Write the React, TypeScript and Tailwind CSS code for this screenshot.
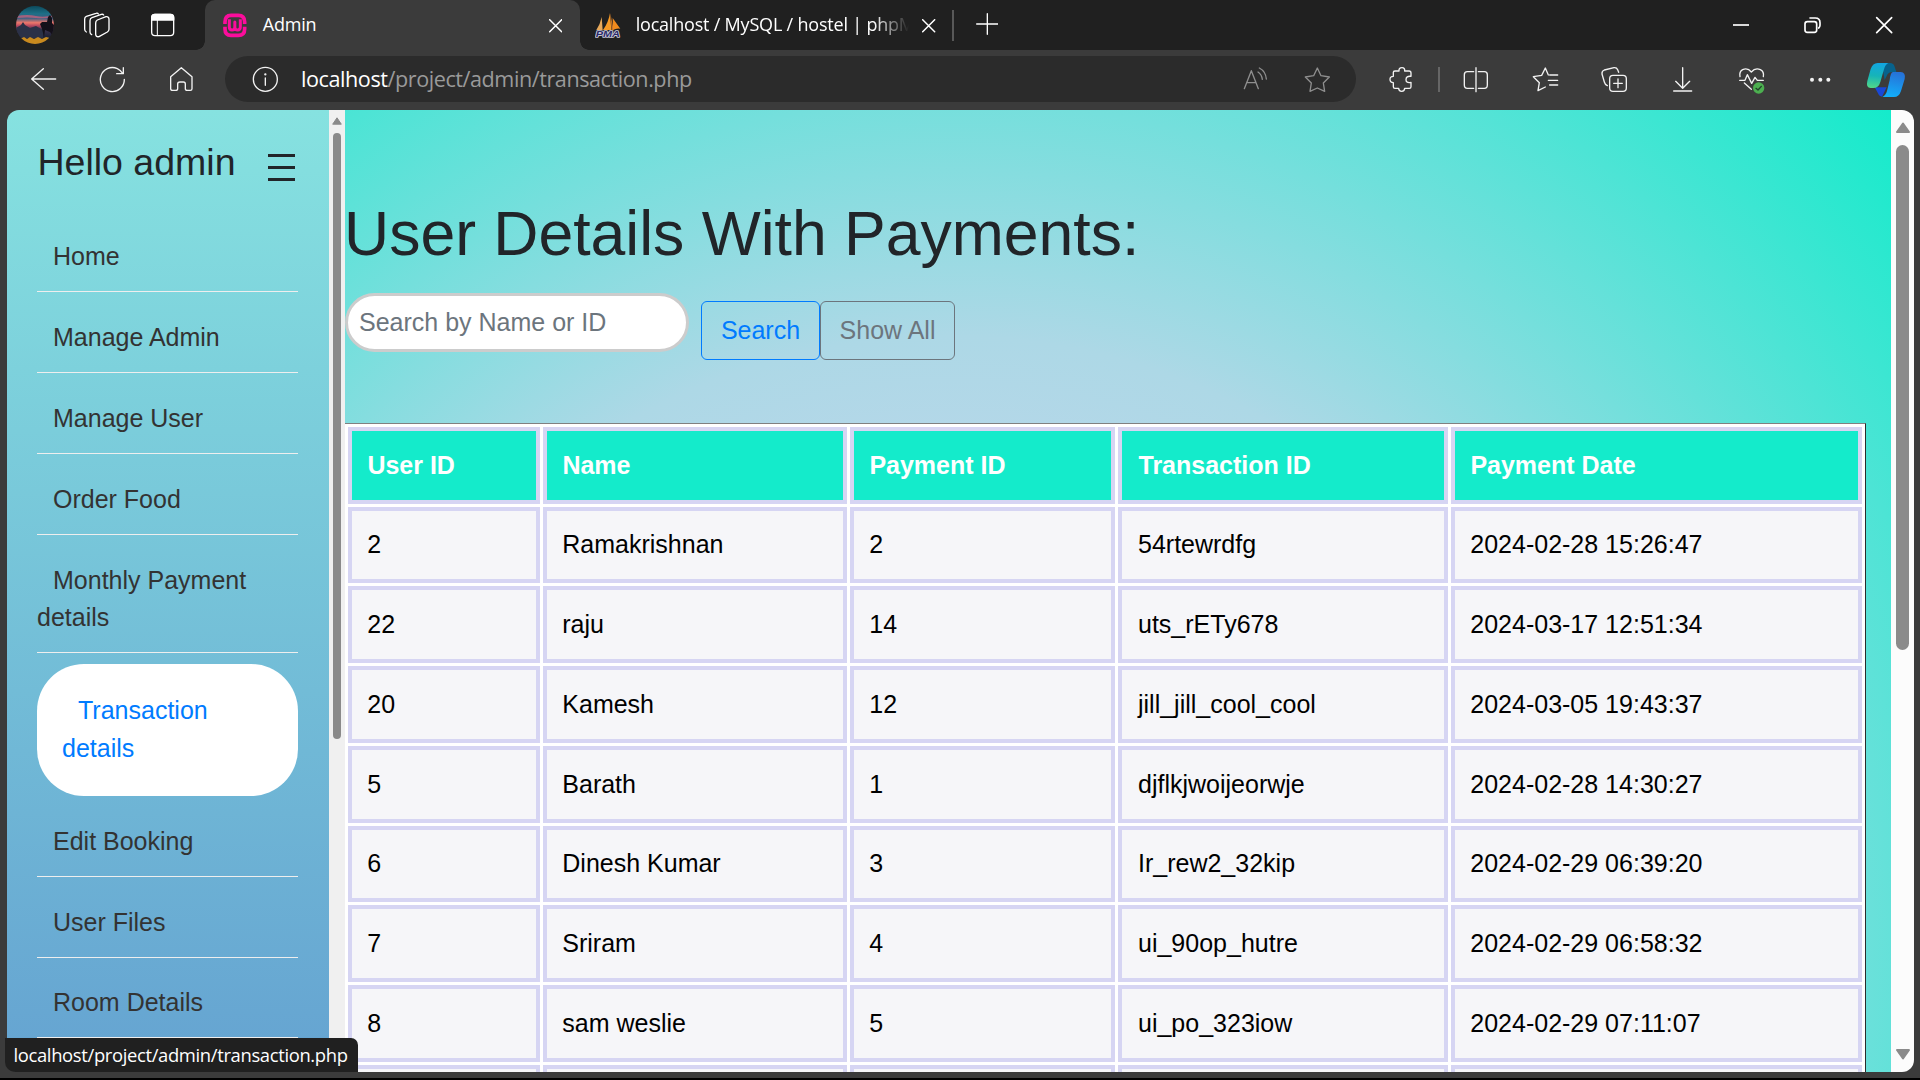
import React from "react";

const columns = ["User ID", "Name", "Payment ID", "Transaction ID", "Payment Date"];

const rows = [
  ["2", "Ramakrishnan", "2", "54rtewrdfg", "2024-02-28 15:26:47"],
  ["22", "raju", "14", "uts_rETy678", "2024-03-17 12:51:34"],
  ["20", "Kamesh", "12", "jill_jill_cool_cool", "2024-03-05 19:43:37"],
  ["5", "Barath", "1", "djflkjwoijeorwje", "2024-02-28 14:30:27"],
  ["6", "Dinesh Kumar", "3", "Ir_rew2_32kip", "2024-02-29 06:39:20"],
  ["7", "Sriram", "4", "ui_90op_hutre", "2024-02-29 06:58:32"],
  ["8", "sam weslie", "5", "ui_po_323iow", "2024-02-29 07:11:07"],
  ["", "", "", "", ""],
];

const gridCols = "grid grid-cols-[192px_304px_265px_330px_411px] gap-x-[3px]";

function Icon({
  box,
  className,
  children,
  sw = 4,
}: {
  box: [number, number, number, number];
  className?: string;
  children: React.ReactNode;
  sw?: number;
}) {
  return (
    <svg
      width={box[2] / 3}
      height={box[3] / 3}
      viewBox={box.join(" ")}
      fill="none"
      stroke="currentColor"
      strokeWidth={sw}
      strokeLinecap="round"
      strokeLinejoin="round"
      className={"block shrink-0 " + (className ?? "")}
    >
      {children}
    </svg>
  );
}

function Avatar() {
  return (
    <svg width="38" height="38" viewBox="0 0 38 38" className="ml-4 block shrink-0">
      <defs>
        <linearGradient id="sky" x1="0" y1="0" x2="0" y2="1">
          <stop offset="0" stopColor="#0c4a5c" />
          <stop offset="0.2" stopColor="#1d6f86" />
          <stop offset="0.32" stopColor="#3c5f82" />
          <stop offset="0.44" stopColor="#f0776a" />
          <stop offset="0.52" stopColor="#b5485f" />
          <stop offset="0.62" stopColor="#3d3350" />
          <stop offset="0.8" stopColor="#1f2236" />
        </linearGradient>
        <clipPath id="disc">
          <circle cx="19" cy="19" r="19" />
        </clipPath>
      </defs>
      <g clipPath="url(#disc)">
        <rect width="38" height="38" fill="url(#sky)" />
        <path d="M0 10 Q12 8 20 10 T38 9 V11 Q28 13 20 12 T0 12Z" fill="#d3607a" opacity=".7" />
        <path d="M0 22 L5 19 L7 16 L9 19 L14 22 L20 20 L27 24 V32 H0Z" fill="#2b3147" />
        <path d="M24 18 L26 16 L31 16 L32 11 L34 9 L36 12 L36 17 L38 19 V32 L34 26 L29 24 L28 31 L26 23Z" fill="#141019" />
        <path d="M4 33 L8 31 L11 33 L14 31 L18 33 L22 31 L26 33 L30 31 L34 32 L30 38 H8Z" fill="#c98a1e" />
      </g>
    </svg>
  );
}

function TabStrip() {
  return (
    <div className="flex h-[50px] items-stretch bg-[#202020] text-white">
      <div className="flex w-[205px] shrink-0 items-start pt-[6px]">
        <Avatar />
        <Icon box={[246, 18, 90, 114]} className="ml-[28px]">
          <path d="M287 69 Q287 63 292 60 L318 50 Q327 49 327 58 V88 Q327 93 322 96 L297 110 Q288 112 287 103Z" />
          <path d="M275 104 Q270 102 270 96 V62 Q270 55 276 53 L304 43 Q309 42 311 45" />
          <path d="M259 96 Q254 94 254 88 V57 Q254 51 259 49 L288 40 Q293 38 295 42" />
        </Icon>
        <Icon box={[447, 18, 81, 114]} className="ml-[37px]">
          <rect x="455" y="43" width="66" height="64" rx="10" />
          <path d="M455 60 V53 Q455 43 465 43 H511 Q521 43 521 53 V60Z" fill="currentColor" />
          <path d="M472 60 V107" strokeWidth="3" />
        </Icon>
      </div>
      <div className="relative flex w-[375px] shrink-0 items-start rounded-t-[10px] bg-[#3b3b3b] pl-[17px]">
        <span className="absolute -left-[9px] bottom-0 h-[9px] w-[9px] bg-[radial-gradient(circle_at_0_0,#202020_8.5px,#3b3b3b_9px)]" />
        <span className="absolute -right-[9px] bottom-0 h-[9px] w-[9px] bg-[radial-gradient(circle_at_100%_0,#202020_8.5px,#3b3b3b_9px)]" />
        <Icon box={[666, 33, 76, 84]} className="mt-[11px] text-[#fb0d9c]" sw={11}>
          <path d="M675 72 V66 Q675 46 693 46 H715 Q734 46 734 66 V72 M675 80 V87 Q675 106 693 106 H715 Q734 106 734 87 V80" strokeLinecap="butt" />
          <path d="M688 58 V82 Q688 90 696 90 Q704 90 704.5 82 V66 V82 Q705 90 713 90 Q721 90 721 82 V58" strokeWidth="9" strokeLinecap="butt" />
        </Icon>
        <span className="ml-[15.5px] mt-[11px] w-[286px] text-[18px] leading-[27px] tracking-[-0.25px]">Admin</span>
        <Icon box={[0, 0, 40, 42]} className="mt-[19px]" sw={4.5}>
          <path d="M2 2 L38 38 M38 2 L2 38" />
        </Icon>
      </div>
      <div className="flex items-start pl-[15px]">
        <Icon box={[104, 36, 80, 80]} className="mt-[12px]" sw={0}>
          <path d="M108 90 Q120 72 124 51 L127 90Z" fill="#e8a95a" />
          <path d="M128 90 Q145 66 149 39 L153 90Z" fill="#f79a26" />
          <path d="M150 40 L154 90 H160Z" fill="#c9762b" />
          <path d="M157 54 L180 86 Q168 84 158 90Z" fill="#f08a1d" />
          <text x="106" y="112" fontSize="29" fontWeight="900" fontStyle="italic" fontFamily="Liberation Sans" fill="#2b2b6b" stroke="#c9c9d8" strokeWidth="5" paintOrder="stroke" textLength="73" lengthAdjust="spacingAndGlyphs">
            PMA
          </text>
        </Icon>
        <span className="ml-[14px] mt-[11px] w-[273px] whitespace-nowrap text-[18px] leading-[27px] tracking-[-0.2px] [mask-image:linear-gradient(to_right,black_87%,transparent_100%)]">
          localhost / MySQL / hostel | phpM
        </span>
        <Icon box={[0, 0, 42, 42]} className="ml-[13px] mt-[19px]" sw={4.5}>
          <path d="M2 2 L38 38 M38 2 L2 38" />
        </Icon>
        <span className="ml-[16px] mt-[10px] h-[31px] w-[2px] bg-[#585858]" />
        <Icon box={[0, 0, 68, 68]} className="ml-[22px] mt-[13px]">
          <path d="M2 33 H66 M34 2 V64" />
        </Icon>
      </div>
      <div className="ml-auto flex items-start pt-[16px]">
        <Icon box={[456, 48, 54, 54]} sw={5}>
          <path d="M459 75 H507" strokeLinecap="butt" />
        </Icon>
        <Icon box={[669, 48, 57, 54]} className="ml-[53px]" sw={5}>
          <rect x="675" y="65" width="35" height="32" rx="7" />
          <path d="M690 54 H706 Q720 54 720 68 V76 Q720 81 716 84" />
        </Icon>
        <Icon box={[885, 48, 57, 54]} className="ml-[53px] mr-[26px]" sw={5}>
          <path d="M890 53 L935 98 M935 53 L890 98" />
        </Icon>
      </div>
    </div>
  );
}

function Copilot() {
  return (
    <Icon box={[855, 180, 126, 120]} className="ml-[34px]" sw={0}>
      <defs>
        <linearGradient id="cpl" x1="0.3" y1="0" x2="0.2" y2="1">
          <stop offset="0" stopColor="#12a6e0" />
          <stop offset="0.5" stopColor="#16b4b8" />
          <stop offset="1" stopColor="#52d987" />
        </linearGradient>
        <linearGradient id="cpr" x1="0.5" y1="0" x2="0.3" y2="1">
          <stop offset="0" stopColor="#2672d8" />
          <stop offset="1" stopColor="#12b0fa" />
        </linearGradient>
      </defs>
      <path d="M905 189 H930 Q941 189 944 200 L949 216 H938 Q924 216 920 228 L914 240Z" fill="#07628c" />
      <path d="M884 262 H920 L906 290 Q898 290 894 280Z" fill="#1848d8" />
      <path d="M893 189 H925 Q916 193 912 208 L901 246 Q896 264 880 264 H872 Q857 264 862 243 L872 207 Q878 189 893 189Z" fill="url(#cpl)" />
      <path d="M939 216 H962 Q978 217 974 237 L963 273 Q957 291 942 291 H907 Q917 287 921 273 L929 240 Q932 216 939 216Z" fill="url(#cpr)" />
    </Icon>
  );
}

function Toolbar() {
  return (
    <div className="flex h-[60px] items-start bg-[#3b3b3b] text-[#f2f2f2]">
      <Icon box={[90, 150, 84, 180]} className="ml-[30px]">
        <path d="M95 237 H167 M130 206 L95 237 L130 268" />
      </Icon>
      <Icon box={[297, 150, 84, 180]} className="ml-[41px]">
        <path d="M373 238 A36 36 0 1 1 352 206 Q361 210 368 220 M370 203 V221 H350" />
      </Icon>
      <Icon box={[507, 150, 78, 180]} className="ml-[42px]">
        <path d="M512 230 L544 203 L576 230 V266 Q576 271 571 271 H562 Q556 271 556 266 V252 Q556 246 550 246 H540 Q533 246 533 252 V266 Q533 271 527 271 H518 Q512 271 512 266Z" />
      </Icon>
      <div className="ml-[30px] mt-[6px] flex h-[46px] w-[1131px] shrink-0 items-start rounded-full bg-[#2b2b2b]">
        <Icon box={[756, 168, 81, 138]} className="ml-[27px]">
          <circle cx="796" cy="238" r="36" />
          <path d="M796 234 V256" />
          <circle cx="796" cy="223" r="1.5" fill="currentColor" />
        </Icon>
        <span className="ml-[22px] mt-[8px] w-[938px] whitespace-nowrap text-[21.6px] leading-[30px] tracking-[-0.44px] text-[#9a9a9a]">
          <span className="text-white">localhost</span>/project/admin/transaction.php
        </span>
        <Icon box={[39, 18, 78, 138]} className="ml-[4px] text-[#8f8f8f]">
          <path d="M43 116 L64 62 L85 116 M51 98 H78 M84 66 Q95 73 97 88 M88 54 Q107 64 109 87" />
        </Icon>
        <Icon box={[219, 18, 90, 138]} className="ml-[34px] text-[#8f8f8f]">
          <path d="M262 54 L273 77 L298 81 L280 99 L284 124 L262 114 L240 124 L244 99 L226 81 L251 77Z" />
        </Icon>
      </div>
      <Icon box={[474, 0, 78, 180]} className="ml-[32px]">
        <path d="M490 67 Q490 63 495 63 H507 Q506 53 516 53 Q525 53 524 63 H537 Q543 63 543 69 V79 Q528 77 528 89 Q528 100 543 97 V110 Q543 115 538 115 H524 Q524 124 515 124 Q506 124 506 115 H495 Q490 115 490 110 V98 Q480 98 480 88 Q480 79 490 79Z" />
      </Icon>
      <span className="ml-[24px] mt-[17px] h-[25px] w-[2px] bg-[#666]" />
      <Icon box={[696, 0, 84, 180]} className="ml-[22px]">
        <path d="M731 65 H712 Q703 65 703 74 V105 Q703 115 712 115 H731 M745 65 H763 Q772 65 772 74 V105 Q772 115 763 115 H745 M738 53 V125" />
      </Icon>
      <Icon box={[903, 0, 90, 180]} className="ml-[41px]">
        <path d="M946 111 L924 122 L928 98 L910 80 L935 76 L946 54 L955 75 M959 75 H983 M955 91 H983 M959 105 H983" />
      </Icon>
      <Icon box={[60, 150, 84, 180]} className="ml-[39px]">
        <rect x="89" y="226" width="50" height="48" rx="10" />
        <path d="M114 237 V263 M101 250 H127 M82 257 Q75 254 73 246 L66 222 Q65 213 73 210 L102 203 Q110 202 113 209 L116 217" />
      </Icon>
      <Icon box={[276, 150, 66, 180]} className="ml-[44px]">
        <path d="M308 203 V264 M287 244 L308 265 L329 244 M281 273 H335" />
      </Icon>
      <Icon box={[474, 150, 84, 180]} className="ml-[44px]">
        <path d="M480 230 Q477 215 488 209 Q503 202 514 216 Q526 202 541 209 Q553 215 550 230 M479 241 H495 L502 224 L515 250 L525 232 L532 241 H550 M493 249 L514 268" />
        <circle cx="536" cy="264" r="17" fill="#4caf50" stroke="none" />
        <path d="M528 265 L534 270 L544 259" stroke="#23402a" />
      </Icon>
      <Icon box={[687, 150, 66, 180]} className="ml-[43px]" sw={0}>
        <circle cx="696" cy="239" r="6" fill="currentColor" />
        <circle cx="721" cy="239" r="6" fill="currentColor" />
        <circle cx="745" cy="239" r="6" fill="currentColor" />
      </Icon>
      <div className="pt-[10px]">
        <Copilot />
      </div>
    </div>
  );
}

function NavItem({ label }: { label: string }) {
  return (
    <li className="mt-[11.2px] border-b border-[#eee] pb-[15.6px] pt-[15.5px] indent-[16px] leading-[37.5px] text-[#333]">
      {label}
    </li>
  );
}

function Sidebar() {
  return (
    <aside className="flex w-[338px] shrink-0">
      <div className="w-[322px] overflow-hidden bg-[linear-gradient(#86e2e0,#65a3d1)] pl-[30px] pr-[31px]">
        <div className="flex items-start justify-between pr-[3px] pt-[30px]">
          <h3 className="pl-[0.5px] text-[37.5px] leading-[45px] text-[#212529]">Hello admin</h3>
          <div className="mt-[14px] flex w-[27px] flex-col gap-[9px]">
            <span className="h-[3px] bg-[#212529]" />
            <span className="h-[3px] bg-[#212529]" />
            <span className="h-[3px] bg-[#212529]" />
          </div>
        </div>
        <ul className="mt-[37.9px]">
          <NavItem label="Home" />
          <NavItem label="Manage Admin" />
          <NavItem label="Manage User" />
          <NavItem label="Order Food" />
          <NavItem label="Monthly Payment details" />
          <li className="mt-[11px] h-[132px] rounded-[47px] bg-white px-[25px] pt-[28px] indent-[16px] leading-[37.5px] text-[#007bff]">
            Transaction details
          </li>
          <NavItem label="Edit Booking" />
          <NavItem label="User Files" />
          <NavItem label="Room Details" />
        </ul>
      </div>
      <div className="flex w-4 flex-col items-center bg-[#f0f0f0] pt-[7px]">
        <svg width="10" height="8" viewBox="0 0 10 8">
          <path d="M5 0.8 L9.3 7.2 H0.7Z" fill="#8a8a8a" stroke="#8a8a8a" strokeLinejoin="round" />
        </svg>
        <div className="mt-[8px] h-[606px] w-[8px] rounded-full bg-[#8a8a8a]" />
      </div>
    </aside>
  );
}

function PaymentTable() {
  return (
    <div className="flex w-[1521px] flex-col gap-[3px] border-r border-t border-r-[#2c2c2c] border-t-[#808080] bg-white pl-[3px] pt-[3px]">
      <div className={gridCols}>
        {columns.map((c, j) => (
          <div
            key={c}
            className={
              "flex h-[76.7px] items-center border-4 border-[#d6d5f3] bg-[#14ebcb] font-bold text-white " +
              (j === 3 ? "pl-[16.5px]" : "pl-[15.4px]")
            }
          >
            {c}
          </div>
        ))}
      </div>
      {rows.map((r, i) => (
        <div key={i} className={gridCols}>
          {r.map((v, j) => (
            <div
              key={j}
              className={
                "flex h-[76.75px] items-center border-4 border-[#d6d5f3] bg-[#f6f6f9] text-black " +
                (j === 3 ? "pl-[16px]" : "pl-[15.3px]")
              }
            >
              {v}
            </div>
          ))}
        </div>
      ))}
    </div>
  );
}

function PageScrollbar() {
  return (
    <div className="flex w-[23px] shrink-0 flex-col items-center bg-[#fcfcfc] pt-[12px]">
      <svg width="16" height="12" viewBox="0 0 16 12">
        <path d="M8 1.5 L14 10 H2Z" fill="#8b8b8b" stroke="#8b8b8b" strokeWidth="2" strokeLinejoin="round" />
      </svg>
      <div className="mt-[11px] h-[505px] w-[13px] rounded-full bg-[#8b8b8b]" />
      <svg width="16" height="12" viewBox="0 0 16 12" className="mb-[12px] mt-auto">
        <path d="M8 10.5 L14 2 H2Z" fill="#8b8b8b" stroke="#8b8b8b" strokeWidth="2" strokeLinejoin="round" />
      </svg>
    </div>
  );
}

export default function App() {
  return (
    <div className="relative flex h-[1080px] w-[1920px] flex-col overflow-hidden border-b-2 border-black bg-[#3b3b3b] font-['Open_Sans',sans-serif]">
      <TabStrip />
      <Toolbar />
      <div className="ml-[7px] flex h-[962px] w-[1907px] overflow-hidden rounded-[12px] font-['Liberation_Sans',Arial,sans-serif] text-[25px]">
        <Sidebar />
        <main className="w-[1546px] shrink-0 overflow-hidden bg-[radial-gradient(circle_1280px_at_604px_866px,#d8d4f5,#add8e6_50%,#14ebcb_100%)]">
          <h1 className="-ml-px pt-[86px] text-[62.5px] leading-[75px] text-[#212529]">User Details With Payments:</h1>
          <div className="mt-[22px] flex h-[130px] items-start">
            <input
              type="text"
              placeholder="Search by Name or ID"
              className="h-[59px] w-[344px] rounded-[31px] border-[3px] border-[#ccc] bg-white px-[11px] outline-none placeholder:text-[#6c757d] placeholder:opacity-100"
            />
            <button className="ml-[12px] mt-[8px] h-[59px] w-[119px] rounded-[6px] border border-[#007bff] text-[#007bff]">Search</button>
            <button className="mt-[8px] h-[59px] w-[135px] rounded-[6px] border border-[#6c757d] text-[#6c757d]">Show All</button>
          </div>
          <PaymentTable />
        </main>
        <PageScrollbar />
      </div>
      <div className="absolute bottom-[6px] left-[5px] flex h-[34px] w-[353px] items-center whitespace-nowrap rounded-bl-[10px] rounded-tr-[7px] bg-[#202020] pl-[8.5px] text-[18.4px] tracking-[-0.34px] text-white">
        localhost/project/admin/transaction.php
      </div>
    </div>
  );
}
